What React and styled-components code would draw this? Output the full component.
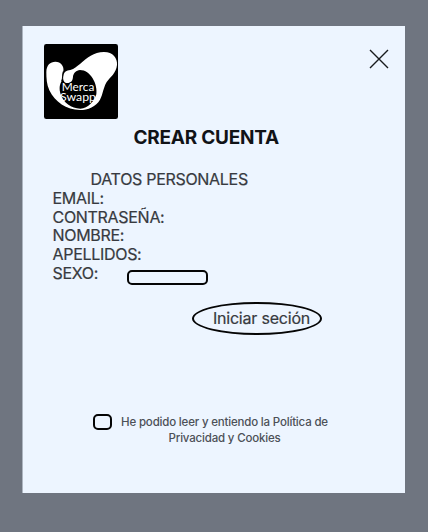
import React from "react";
import styled, { createGlobalStyle } from "styled-components";

const GlobalStyle = createGlobalStyle`
  *, *::before, *::after { box-sizing: border-box; }
  body { margin: 0; background: #6f7580; }
`;

const Page = styled.div`
  width: 428px;
  height: 532px;
  padding: 26px 23px 39px 22px;
  background: #6f7580;
  font-family: Inter, "Liberation Sans", sans-serif;
`;

const Card = styled.main`
  display: flex;
  flex-direction: column;
  height: 467px;
  border-left: 1px solid #adb5c0;
  background: #edf5ff;
  color: #373a40;
`;

const Header = styled.header`
  display: flex;
  justify-content: space-between;
  align-items: flex-start;
  height: 93px;
  padding: 18px 16px 0 21px;
`;

const Logo = styled.svg`
  width: 74px;
  height: 75px;
`;

const CloseButton = styled.button`
  display: flex;
  margin-top: 5px;
  padding: 0;
  border: 0;
  background: none;
`;

const Title = styled.h1`
  height: 37px;
  margin: 6px 0 0 110.5px;
  font-size: 19px;
  font-weight: 700;
  line-height: 26px;
  letter-spacing: -0.25px;
  color: #111317;
  white-space: nowrap;
`;

const Form = styled.section`
  display: flex;
  flex-direction: column;
  height: 132px;
  padding: 8px 0 0 29.5px;
  font-size: 16px;
  line-height: 18.75px;
  letter-spacing: -0.3px;
  white-space: nowrap;
  -webkit-text-stroke: 0.2px #373a40;
`;

const SectionTitle = styled.h2`
  margin: 0 0 0 38px;
  font: inherit;
`;

const Field = styled.label`
  display: flex;
  height: 18.75px;
`;

const FieldName = styled.span`
  width: 74.5px;
`;

const Select = styled.span`
  width: 81px;
  height: 15px;
  margin-top: 6px;
  border: 2px solid #050505;
  border-radius: 5px;
`;

const Submit = styled.button`
  display: flex;
  align-items: center;
  justify-content: center;
  width: 130px;
  height: 33px;
  margin: 8px 0 0 169px;
  padding: 0 0 2px 9px;
  border: 2px solid #050505;
  border-radius: 50%;
  background: none;
  font: 400 16px/20px Inter, sans-serif;
  letter-spacing: -0.2px;
  color: #373a40;
  white-space: nowrap;
  -webkit-text-stroke: 0.2px #373a40;
`;

const Consent = styled.label`
  display: flex;
  align-items: flex-start;
  margin: 78px 0 0 70px;
`;

const Checkbox = styled.span`
  width: 19px;
  height: 16px;
  margin-top: 1px;
  border: 2px solid #050505;
  border-radius: 5px;
`;

const ConsentText = styled.span`
  width: 216px;
  margin: 2px 0 0 4.5px;
  font-size: 11.5px;
  font-weight: 500;
  line-height: 15.5px;
  letter-spacing: -0.18px;
  text-align: center;
  color: #4c5057;
`;

function BrandLogo() {
  return (
    <Logo viewBox="0 0 222 225" role="img" aria-label="Merca Swapp">
      <rect width="222" height="225" rx="7" />
      <path
        fill="#fff"
        d="M7 85C7 63 19 53 34 53C51 53 61 67 58 82C54 91 57 100 53 112C46 121 45 137 50 151C58 176 82 194 109 194C133 193 151 171 157 151C162 120 139 78 108 78C96 79 90 87 87 96C87 111 80 117 70 117C59 117 56 106 58 95C60 83 67 80 79 78C91 76 98 67 108 60C129 42 149 24 180 24C207 24 221 43 219 63C217 87 199 99 188 114C177 133 177 150 168 167C156 188 132 198 108 198C67 198 33 174 16 139C8 121 7 102 7 85Z"
      />
      <path
        d="M58 82C55 91 57 101 53 112"
        fill="none"
        stroke="#000"
        strokeWidth="3"
      />
      <g fill="#fff" fontFamily="Lato, sans-serif" fontSize="35">
        <text x="53" y="142" textLength="98" lengthAdjust="spacingAndGlyphs">Merca</text>
        <text x="48" y="170" textLength="108" lengthAdjust="spacingAndGlyphs">Swapp</text>
      </g>
    </Logo>
  );
}

export default function App() {
  return (
    <>
      <GlobalStyle />
      <Page>
        <Card>
          <Header>
            <BrandLogo />
            <CloseButton aria-label="Cerrar">
              <svg width="20" height="20" viewBox="0 0 20 20">
                <path d="M1 1L19 19M19 1L1 19" stroke="#181a1d" strokeWidth="1.4" />
              </svg>
            </CloseButton>
          </Header>
          <Title>CREAR CUENTA</Title>
          <Form>
            <SectionTitle>DATOS PERSONALES</SectionTitle>
            <Field>EMAIL:</Field>
            <Field>CONTRASEÑA:</Field>
            <Field>NOMBRE:</Field>
            <Field>APELLIDOS:</Field>
            <Field><FieldName>SEXO:</FieldName><Select /></Field>
          </Form>
          <Submit>Iniciar seción</Submit>
          <Consent>
            <Checkbox />
            <ConsentText>
              He podido leer y entiendo la Política de Privacidad y Cookies
            </ConsentText>
          </Consent>
        </Card>
      </Page>
    </>
  );
}
